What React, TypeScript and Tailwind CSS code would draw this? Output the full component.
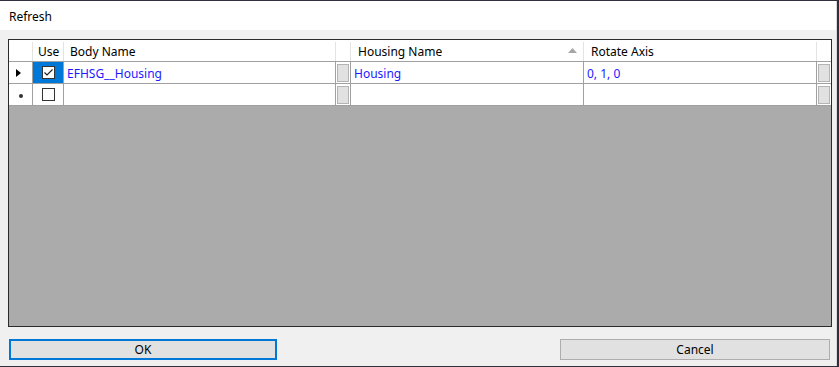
import clsx from "clsx";

const font = { fontFamily: '"Segoe UI", "Noto Sans", Arial, sans-serif' };

function CheckBox({ checked }: { checked?: boolean }) {
  return (
    <div className="w-[13px] h-[13px] border border-[#333333] bg-white flex items-center justify-center">
      {checked && (
        <svg width="11" height="11" viewBox="0 0 11 11">
          <path d="M1.5 5.5 L4 8 L9.5 2.5" fill="none" stroke="#222" strokeWidth="1.2" />
        </svg>
      )}
    </div>
  );
}

function CellButton() {
  return (
    <div className="w-[12px] h-[18px] bg-[#e1e1e1] border border-[#b4b4b4]" />
  );
}

type RowProps = {
  current?: boolean;
  checked?: boolean;
  body?: string;
  housing?: string;
  axis?: string;
};

function Row({ current, checked, body, housing, axis }: RowProps) {
  return (
    <div className="flex h-[22px] border-b border-[#a0a0a0] bg-white">
      <div className="w-[24px] shrink-0 border-r border-[#a0a0a0] flex items-center pl-[7px]">
        {current ? (
          <svg width="5" height="8" viewBox="0 0 5 8" className="mt-[1px]">
            <path d="M0 0 L5 4 L0 8 Z" fill="#000" />
          </svg>
        ) : (
          <span className="w-[4px] h-[4px] rounded-full bg-[#333] ml-[3px] mt-[3px]" />
        )}
      </div>
      <div
        className={clsx(
          "w-[31px] shrink-0 border-r border-[#a0a0a0] flex items-center justify-center pl-[1px]",
          current ? "bg-[#0078d7]" : "bg-white"
        )}
      >
        <CheckBox checked={checked} />
      </div>
      <div className="w-[272px] shrink-0 border-r border-[#a0a0a0] px-[3px] pt-[2px] flex items-center text-[#1a1aff]">
        {body}
      </div>
      <div className="w-[15px] shrink-0 border-r border-[#a0a0a0] flex items-center justify-center">
        <CellButton />
      </div>
      <div className="w-[233px] shrink-0 border-r border-[#a0a0a0] px-[3px] pt-[2px] flex items-center text-[#1a1aff]">
        {housing}
      </div>
      <div className="w-[233px] shrink-0 border-r border-[#a0a0a0] px-[3px] pt-[2px] flex items-center text-[#1a1aff]">
        {axis}
      </div>
      <div className="w-[14px] shrink-0 flex items-center justify-center">
        <CellButton />
      </div>
    </div>
  );
}

export default function App() {
  return (
    <div className="w-[839px] h-[367px] bg-[#30303c] pt-px" style={font}>
      <div className="w-[837px] h-[365px] bg-[#f0f0f0] border-r border-[#d9d9d9] flex flex-col text-[12px] text-black">
        <div className="h-[29px] bg-white flex items-center pl-[9px] pt-[2px]">Refresh</div>

        <div className="ml-[8px] mt-[9px] w-[824px] h-[288px] border border-[#2b2b2b] bg-[#ababab] flex flex-col">
          <div className="flex h-[22px] bg-white border-b border-[#a0a0a0] pt-[2px]">
            <div className="w-[24px] shrink-0 border-r border-[#e3e3e3]" />
            <div className="w-[31px] shrink-0 border-r border-[#e3e3e3] flex items-center pl-[5px]">Use</div>
            <div className="w-[272px] shrink-0 border-r border-[#e3e3e3] flex items-center pl-[6px]">Body Name</div>
            <div className="w-[15px] shrink-0 border-r border-[#e3e3e3]" />
            <div className="w-[233px] shrink-0 border-r border-[#e3e3e3] flex items-center pl-[7px] pr-[6px] justify-between">
              <span>Housing Name</span>
              <svg width="9" height="5" viewBox="0 0 9 5" className="mb-[2px]">
                <path d="M0 5 L4.5 0 L9 5 Z" fill="#a6a6a6" />
              </svg>
            </div>
            <div className="w-[233px] shrink-0 border-r border-[#e3e3e3] flex items-center pl-[7px]">Rotate Axis</div>
            <div className="w-[14px] shrink-0" />
          </div>
          <Row current checked body="EFHSG__Housing" housing="Housing" axis="0, 1, 0" />
          <Row />
        </div>

        <div className="flex justify-between ml-[9px] mr-[6px] mt-[12px]">
          <button className="w-[268px] h-[21px] bg-[#e1e1e1] border-2 border-[#0078d7] flex items-center justify-center pt-[1px]">
            OK
          </button>
          <button className="w-[270px] h-[21px] bg-[#e1e1e1] border border-[#adadad] flex items-center justify-center pt-[1px]">
            Cancel
          </button>
        </div>
      </div>
    </div>
  );
}
